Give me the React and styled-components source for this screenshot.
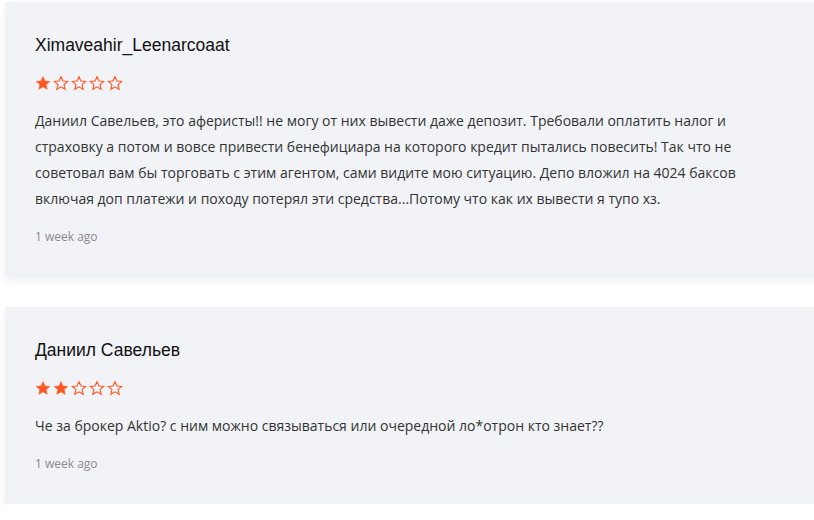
import React from "react";
import styled, { createGlobalStyle } from "styled-components";

const Global = createGlobalStyle`
  html, body { margin: 0; padding: 0; background: #fff; overflow: hidden; }
  body { font-family: "Open Sans", sans-serif; }
`;

const List = styled.div`
  display: flex;
  flex-direction: column;
  gap: 30px;
  padding: 2px 0 0 5px;
`;

const Card = styled.div`
  background: #f2f3f7;
  box-shadow: 0 4px 8px rgba(0, 0, 0, 0.06);
  padding: 32px 30px 31px 30px;
  margin-right: -12px;
  display: flex;
  flex-direction: column;
`;

const Name = styled.div`
  font-family: "Liberation Sans", Arial, sans-serif;
  font-size: 17.5px;
  line-height: 22px;
  color: #111;
`;

const Stars = styled.div`
  display: flex;
  gap: 2px;
  margin-top: 19px;
  height: 16px;
`;

const Body = styled.p`
  margin: 17px 0 0;
  max-width: 745px;
  font-family: "Open Sans", sans-serif;
  font-size: 14px;
  line-height: 26px;
  color: #333;
`;

const Date = styled.div`
  margin-top: 16px;
  font-family: "Open Sans", sans-serif;
  font-size: 12px;
  line-height: 18px;
  color: #8a8a8a;
`;

const Star = ({ filled }) => (
  <svg width="16" height="16" viewBox="0 0 24 24">
    <path
      d="M12 2.5l2.9 6.6 7.1.6-5.4 4.7 1.6 7-6.2-3.7-6.2 3.7 1.6-7L2 9.7l7.1-.6z"
      fill={filled ? "#ff5722" : "none"}
      stroke="#ff5722"
      strokeWidth={filled ? 1 : 1.7}
      strokeLinejoin="miter"
    />
  </svg>
);

const Rating = ({ value }) => (
  <Stars>
    {[0, 1, 2, 3, 4].map((i) => (
      <Star key={i} filled={i < value} />
    ))}
  </Stars>
);

const reviews = [
  {
    name: "Ximaveahir_Leenarcoaat",
    rating: 1,
    text:
      "Даниил Савельев, это аферисты!! не могу от них вывести даже депозит. Требовали оплатить налог и страховку а потом и вовсе привести бенефициара на которого кредит пытались повесить! Так что не советовал вам бы торговать с этим агентом, сами видите мою ситуацию. Депо вложил на 4024 баксов включая доп платежи и походу потерял эти средства...Потому что как их вывести я тупо хз.",
  },
  {
    name: "Даниил Савельев",
    rating: 2,
    text: "Че за брокер Aktio? с ним можно связываться или очередной ло*отрон кто знает??",
  },
];

export default function App() {
  return (
    <>
      <Global />
      <List>
        {reviews.map((r) => (
          <Card key={r.name}>
            <Name>{r.name}</Name>
            <Rating value={r.rating} />
            <Body>{r.text}</Body>
            <Date>1 week ago</Date>
          </Card>
        ))}
      </List>
    </>
  );
}
